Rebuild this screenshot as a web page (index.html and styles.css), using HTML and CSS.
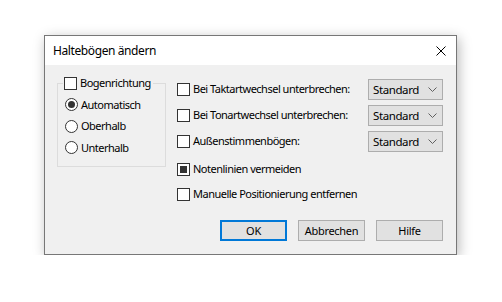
FILE: index.html
```html
<!DOCTYPE html>
<html lang="de">
<head>
    <meta charset="UTF-8">
    <title>Haltebögen ändern</title>
    <link rel="stylesheet" href="styles.css">
</head>
<body>
    <div class="dialog">
        <div class="titlebar">
            <span class="title">Haltebögen ändern</span>
            <svg class="close" viewBox="0 0 10 10">
                <path d="M0.5 0.5L9.5 9.5M9.5 0.5L0.5 9.5"/>
            </svg>
        </div>
        <div class="content">
            <div class="main">
                <fieldset class="group">
                    <legend class="check-row">
                        <span class="box"></span><span>Bogenrichtung</span>
                    </legend>
                    <div class="radio-row"><span class="radio checked"></span><span>Automatisch</span></div>
                    <div class="radio-row"><span class="radio"></span><span>Oberhalb</span></div>
                    <div class="radio-row"><span class="radio"></span><span>Unterhalb</span></div>
                </fieldset>
                <div class="options">
                    <div class="option-row">
                        <div class="check-row"><span class="box"></span><span>Bei Taktartwechsel unterbrechen:</span></div>
                        <div class="select"><span>Standard</span><svg class="chevron" viewBox="0 0 9 5"><path d="M0.5 0.5L4.5 4.5L8.5 0.5"/></svg></div>
                    </div>
                    <div class="option-row">
                        <div class="check-row"><span class="box"></span><span>Bei Tonartwechsel unterbrechen:</span></div>
                        <div class="select"><span>Standard</span><svg class="chevron" viewBox="0 0 9 5"><path d="M0.5 0.5L4.5 4.5L8.5 0.5"/></svg></div>
                    </div>
                    <div class="option-row">
                        <div class="check-row"><span class="box"></span><span>Außenstimmenbögen:</span></div>
                        <div class="select"><span>Standard</span><svg class="chevron" viewBox="0 0 9 5"><path d="M0.5 0.5L4.5 4.5L8.5 0.5"/></svg></div>
                    </div>
                    <div class="option-row spaced">
                        <div class="check-row"><span class="box mixed"></span><span>Notenlinien vermeiden</span></div>
                    </div>
                    <div class="option-row last">
                        <div class="check-row"><span class="box"></span><span>Manuelle Positionierung entfernen</span></div>
                    </div>
                </div>
            </div>
            <div class="buttons">
                <button class="btn default">OK</button>
                <button class="btn">Abbrechen</button>
                <button class="btn">Hilfe</button>
            </div>
        </div>
    </div>
</body>
</html>
```

FILE: styles.css
```css
* {
    margin: 0;
    padding: 0;
    box-sizing: border-box;
}

body {
    background-color: #ffffff;
    font-family: 'Noto Sans', 'Open Sans', sans-serif;
    font-size: 11px;
    letter-spacing: -0.5px;
    color: #000000;
    padding: 35px 0 0 44px;
}

.dialog {
    width: 413px;
    height: 220px;
    background-color: #f0f0f0;
    border: 1px solid #777777;
    box-shadow: 2px 3px 12px rgba(0,0,0,0.28);
    display: flex;
    flex-direction: column;
}

.titlebar {
    height: 29px;
    background-color: #ffffff;
    display: flex;
    align-items: center;
    justify-content: space-between;
    padding: 0 10px 0 8px;
}

.title {
    font-size: 12px;
    letter-spacing: -0.4px;
}

.close {
    width: 10px;
    height: 10px;
    stroke: #000000;
    stroke-width: 1;
    fill: none;
}

.content {
    flex: 1;
    display: flex;
    flex-direction: column;
    padding: 11px 13px 13px 12px;
}

.main {
    flex: 1;
    display: flex;
    gap: 11px;
}

.group {
    width: 109px;
    height: 91px;
    border: 1px solid #dcdcdc;
    padding: 0;
    flex-shrink: 0;
}

.group legend {
    margin-left: 5px;
    padding: 0 2px 0 1px;
    height: 14px;
}

.check-row,
.radio-row {
    display: flex;
    align-items: center;
    gap: 3px;
    line-height: 14px;
    white-space: nowrap;
}

.radio-row {
    margin: 0 0 0 7px;
    height: 21.5px;
}

.radio-row:first-of-type {
    margin-top: 4px;
}

.box {
    width: 13px;
    height: 13px;
    border: 1px solid #333333;
    background-color: #ffffff;
    flex-shrink: 0;
    position: relative;
}

.box.mixed::after {
    content: "";
    position: absolute;
    left: 2px;
    top: 2px;
    width: 7px;
    height: 7px;
    background-color: #333333;
}

.radio {
    width: 13px;
    height: 13px;
    border: 1px solid #333333;
    border-radius: 50%;
    background-color: #ffffff;
    flex-shrink: 0;
    position: relative;
}

.radio.checked::after {
    content: "";
    position: absolute;
    left: 2px;
    top: 2px;
    width: 7px;
    height: 7px;
    border-radius: 50%;
    background-color: #333333;
}

.options {
    flex: 1;
    margin-top: 3px;
    display: flex;
    flex-direction: column;
    gap: 6px;
}

.option-row {
    height: 20px;
    display: flex;
    align-items: center;
    justify-content: space-between;
}

.option-row.spaced {
    margin-top: 2px;
}

.option-row.last {
    margin-top: -1px;
}

.select {
    width: 75px;
    height: 21px;
    background-color: #e1e1e1;
    border: 1px solid #adadad;
    display: flex;
    align-items: center;
    justify-content: space-between;
    padding: 0 5px 0 4px;
    font-size: 11.5px;
    letter-spacing: -0.4px;
}

.chevron {
    width: 9px;
    height: 5px;
    stroke: #606060;
    stroke-width: 1;
    fill: none;
}

.buttons {
    display: flex;
    justify-content: flex-end;
    gap: 11px;
}

.btn {
    width: 67px;
    height: 21px;
    background-color: #e1e1e1;
    border: 1px solid #adadad;
    font-family: inherit;
    font-size: 11px;
    letter-spacing: -0.3px;
    color: #000000;
}

.btn.default {
    border: 2px solid #0078d7;
}
```
